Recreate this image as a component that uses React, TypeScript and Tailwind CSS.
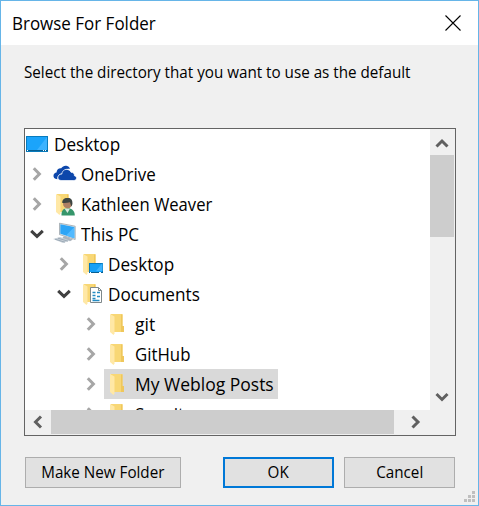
import type { ReactNode } from "react";

const UI = "font-['Open_Sans','Noto_Sans',sans-serif]";

function Chevron({ open }: { open?: boolean }) {
  return open ? (
    <svg width="14" height="10" viewBox="0 0 14 10" className="shrink-0">
      <path d="M1.2 1.8 7 7.4l5.800-5.600" fill="none" stroke="#404040" strokeWidth="3" />
    </svg>
  ) : (
    <svg width="10" height="14" viewBox="0 0 10 14" className="shrink-0">
      <path d="M1.800 1.200 7.400 7l-5.600 5.800" fill="none" stroke="#a6a6a6" strokeWidth="3" />
    </svg>
  );
}

function DesktopIcon() {
  return (
    <svg width="24" height="24" viewBox="0 0 24 24">
      <rect x="1.500" y="4.500" width="21" height="15" fill="#1ba4fb" stroke="#087bbd" />
      <path d="M12 18 22 5v13z" fill="#3db3ff" />
      <path d="M1 18.500h22" stroke="#075f91" />
      <path d="M2 18.500h1M18 18.500h1M20 18.500h1" stroke="#fff" />
    </svg>
  );
}

function CloudIcon() {
  return (
    <svg width="24" height="24" viewBox="0 0 24 24">
      <path d="M4.400 17.200C1.300 17 .3 15 .5 13.400c.2-1.700 1.400-2.700 3-2.900C3.700 7.300 6 5.800 8.200 6.200 9.700 4 12 3.200 14.200 4c1.500.5 2.400 1.500 2.800 2.800-4.400-.8-6.500 1.400-7 4.400-3.700.2-5.800 2.700-5.600 6z" fill="#0d47ab" />
      <path d="M8 18.500c-2.400-.2-3.300-1.700-3.100-3.400.2-1.800 1.700-3 3.900-3 .2-2.800 2.200-4.700 4.600-4.700 2.300 0 3.800 1.100 4.600 2.900 2.300.1 3.500 1.400 3.400 3.400 1.500.4 2.100 1.300 2.100 2.400 0 1.400-1 2.400-2.600 2.400z" fill="#0d47ab" stroke="#fff" strokeWidth=".7" />
    </svg>
  );
}

function FolderShape() {
  return (
    <>
      <path d="M4 2h11.500v12l1.500.8v5.200H4z" fill="#f8d775" />
      <path d="M14 2.500h1.500v11.500H17V20h-3z" fill="#efc75c" />
      <path d="M3 2 7.500 4.500v17L6.500 23 3 20z" fill="#ffe8a6" />
    </>
  );
}

function FolderIcon() {
  return (
    <svg width="24" height="24" viewBox="0 0 24 24">
      <FolderShape />
    </svg>
  );
}

function UserIcon() {
  return (
    <svg width="24" height="24" viewBox="0 0 24 24">
      <FolderShape />
      <path d="M8.500 23.500c-.3-4.500 1.500-7.300 6-7.300 4.600 0 7.300 2.700 7.300 7.300z" fill="#36966b" />
      <path d="m11.500 16.500 3 4.500 2.500-4.500z" fill="#d9e8df" />
      <circle cx="14.600" cy="11.700" r="4.600" fill="#ad8064" />
      <path d="M9.300 11C9 7 12 5.500 15 6c3-.3 5 2.300 4.300 6.500l-1 2-1.300-4.200c-2.700.8-5 .8-7.700.7z" fill="#3d4541" />
    </svg>
  );
}

function ComputerIcon() {
  return (
    <svg width="24" height="24" viewBox="0 0 24 24">
      <path d="m6.500 1.200 15.700 3v13.300L6.500 12.600z" fill="#e5e7e9" stroke="#7e8b94" strokeWidth=".6" />
      <path d="m7.300 2.200 14 2.700v11.300l-14-4.400z" fill="#2da5f6" />
      <path d="M13 13.500 21.300 5v11.200z" fill="#52baff" />
      <path d="m11 14-2 2.500 8 2.700 3-1.700z" fill="#aab4bd" />
      <path d="m0 17 7-2 10 3.500-7 2.500z" fill="#c7d0d8" />
      <path d="m2 17.200 10 3M5 16.200l10 3" stroke="#899aa8" strokeWidth=".7" />
    </svg>
  );
}

function DesktopFolderIcon() {
  return (
    <svg width="24" height="24" viewBox="0 0 24 24">
      <FolderShape />
      <rect x="9.500" y="11.500" width="13" height="9" fill="#17a0f6" stroke="#087bbd" />
      <path d="m16 19 6.500-8v8z" fill="#3db3ff" />
      <path d="M9 20.500h14" stroke="#075f91" />
      <path d="M10 20.500h1M19 20.500h2" stroke="#fff" />
    </svg>
  );
}

function DocumentFolderIcon() {
  return (
    <svg width="24" height="24" viewBox="0 0 24 24">
      <FolderShape />
      <path d="M10.500 5.500h8l3 3v12h-11z" fill="#fff" stroke="#7e888b" />
      <path d="M18.500 5.500v3h3" fill="none" stroke="#7e888b" />
      <path d="M12.500 10.500h3M12.500 13.500h3M17 10.500h3M12.500 16.500h3M17 14.500h3M12.500 18.500h7" stroke="#238bc3" strokeWidth="1.500" />
    </svg>
  );
}

function Row({ indent, open, label, icon, scale, selected, root }: {
  indent: string; open?: boolean; label: string; icon: ReactNode; scale: string; selected?: boolean; root?: boolean;
}) {
  return (
    <div className={`flex h-[30px] w-full shrink-0 items-center ${indent}`}>
      {!root && <span className={`flex shrink-0 ${open ? "-ml-0.5 w-5" : "w-[18px]"}`}><Chevron open={open} /></span>}
      <span className={`flex h-[30px] items-center ${selected ? "w-[174px] bg-[#d9d9d9]" : ""}`}>
        <span className={`h-6 w-6 shrink-0 ${root ? "" : "ml-[3px]"}`}>{icon}</span>
        <span className={`origin-left whitespace-nowrap pb-px text-[17.500px] leading-[28px] ${root ? "ml-[5px]" : "ml-1"} ${scale}`}>{label}</span>
      </span>
    </div>
  );
}

function ArrowButton({ d, className }: { d: string; className: string }) {
  return (
    <button className={`flex shrink-0 items-center justify-center ${className}`}>
      <svg width="14" height="14" viewBox="0 0 14 14"><path d={d} fill="none" stroke="#606060" strokeWidth="3" /></svg>
    </button>
  );
}

export default function App() {
  return (
    <main className={`flex h-[506px] w-[479px] flex-col overflow-hidden border border-[#66b5e8] bg-[#f0f0f0] font-[370] text-black ${UI}`}>
      <header className="flex h-11 shrink-0 items-center justify-between bg-white pl-[11px] pr-[17px]">
        <h1 className="origin-left scale-x-[0.97] whitespace-nowrap text-[17.500px] font-[370] leading-7">Browse For Folder</h1>
        <svg width="16" height="16" viewBox="0 0 16 16"><path d="m.5.5 15 15m0-15-15 15" stroke="#000" strokeWidth="1.100" /></svg>
      </header>
      <p className="ml-[23px] mt-[14px] h-[69px] origin-left scale-x-[0.95] whitespace-nowrap text-[16px] leading-[26px]">
        Select the directory that you want to use as the default
      </p>
      <section className="ml-[23px] flex h-[308px] w-[432px] shrink-0 flex-col border border-[#646464] bg-[#f0f0f0]">
        <div className="flex h-[281px] shrink-0">
          <div className="flex w-[405px] flex-col overflow-hidden bg-white">
            <Row root indent="pl-0" icon={<DesktopIcon />} label="Desktop" scale="scale-x-[0.98]" />
            <Row indent="pl-[7px]" icon={<CloudIcon />} label="OneDrive" scale="scale-x-[0.97]" />
            <Row indent="pl-[7px]" icon={<UserIcon />} label="Kathleen Weaver" scale="scale-x-[0.95]" />
            <Row open indent="pl-[7px]" icon={<ComputerIcon />} label="This PC" scale="scale-x-[0.98]" />
            <Row indent="pl-[34px]" icon={<DesktopFolderIcon />} label="Desktop" scale="scale-x-[0.98]" />
            <Row open indent="pl-[34px]" icon={<DocumentFolderIcon />} label="Documents" scale="scale-x-[0.98]" />
            <Row indent="pl-[61px]" icon={<FolderIcon />} label="git" scale="scale-x-[1]" />
            <Row indent="pl-[61px]" icon={<FolderIcon />} label="GitHub" scale="scale-x-[0.96]" />
            <Row selected indent="pl-[61px]" icon={<FolderIcon />} label="My Weblog Posts" scale="scale-x-[1]" />
            <Row indent="pl-[61px]" icon={<FolderIcon />} label="Snagit" scale="scale-x-[0.98]" />
          </div>
          <div className="flex w-6 flex-col">
            <ArrowButton className="h-[26px] pt-[3px]" d="M1.500 9.500 7 4l5.500 5.500" />
            <div className="h-[82px] bg-[#cdcdcd]" />
            <div className="grow" />
            <ArrowButton className="h-[26px]" d="M1.500 4 7 9.500 12.500 4" />
          </div>
        </div>
        <div className="flex h-6 pb-px">
          <ArrowButton className="w-[26px]" d="M10 1.500 4.500 7l5.500 5.500" />
          <div className="h-6 w-[343px] bg-[#cdcdcd]" />
          <ArrowButton className="ml-[7px] w-7" d="M4.500 1.500 10 7l-5.500 5.500" />
        </div>
      </section>
      <footer className="ml-6 mt-[21px] flex h-[31px] shrink-0 text-[16px] font-[370] leading-[27px]">
        <button className="w-[156px] border border-[#adadad] bg-[#e1e1e1]"><span className="inline-block scale-x-[0.95] whitespace-nowrap">Make New Folder</span></button>
        <button className="ml-[42px] w-[111px] border-2 border-[#0078d7] bg-[#e1e1e1]"><span className="inline-block scale-x-[0.95]">OK</span></button>
        <button className="ml-[10px] w-[111px] border border-[#adadad] bg-[#e1e1e1]"><span className="inline-block scale-x-[0.95]">Cancel</span></button>
      </footer>
      <svg width="12" height="12" viewBox="0 0 12 12" className="ml-[463px] mt-[3px] shrink-0" fill="#bfbfbf">
        <path d="M8 0h3v3H8zM4 4h3v3H4zM8 4h3v3H8zM0 8h3v3H0zM4 8h3v3H4zM8 8h3v3H8z" />
      </svg>
    </main>
  );
}
